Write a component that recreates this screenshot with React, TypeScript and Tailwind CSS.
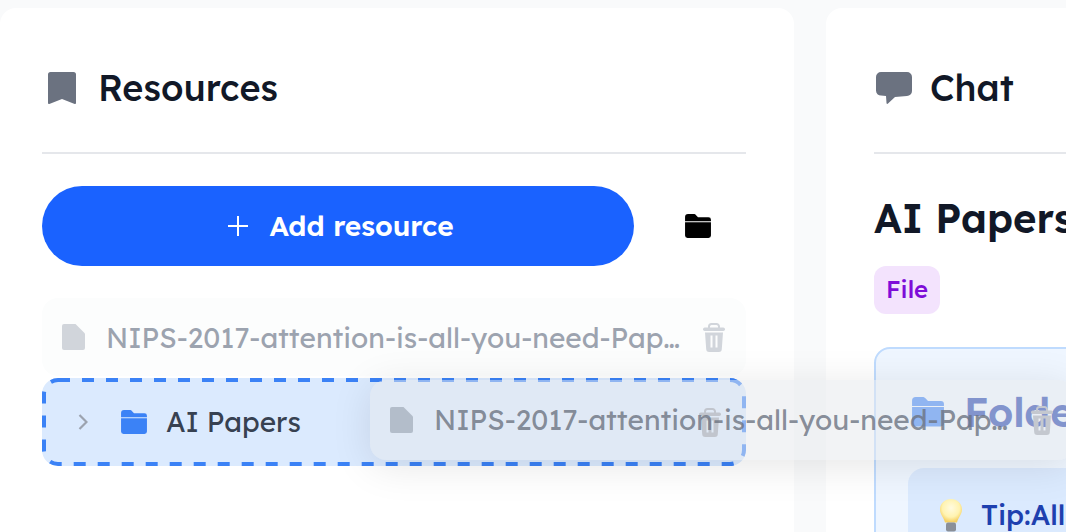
const FONT = "font-['Lexend','Inter','Noto_Sans',sans-serif]";

function Bookmark() {
  return (
    <svg width="28" height="32" viewBox="0 0 28 32" className="shrink-0">
      <path d="M2.500 0h23A2.500 2.500 0 0 1 28 2.500V31a1 1 0 0 1-1.300.9L14 27 1.300 31.900A1 1 0 0 1 0 31V2.500A2.500 2.500 0 0 1 2.500 0Z" fill="#6b7280" />
    </svg>
  );
}
function ChatIcon() {
  return (
    <svg width="36" height="32" viewBox="0 0 36 32" className="shrink-0">
      <path d="M5 0h26a5 5 0 0 1 5 5v14a5 5 0 0 1-5 5l-12 1-7 6.600c-.7.6-1.500.2-1.500-.7L10 24 5 23.600a5 5 0 0 1-5-5V5a5 5 0 0 1 5-5Z" fill="#6b7280" />
    </svg>
  );
}
function Folder({ color, size = 26 }: { color: string; size?: number }) {
  return (
    <svg width={size} height={size * 0.92} viewBox="0 0 26 24" className="shrink-0">
      <path d="M0 3a3 3 0 0 1 3-3h5.500c1.200 0 2 .5 2.800 1.400L13 3.200h10.500A2.500 2.500 0 0 1 26 5.700V7.300H0Z" fill={color} />
      <path d="M0 8.200h26V21.500a2.500 2.500 0 0 1-2.500 2.500H2.500A2.500 2.500 0 0 1 0 21.500Z" fill={color} />
    </svg>
  );
}
function FileIcon({ color }: { color: string }) {
  return (
    <svg width="23" height="26" viewBox="0 0 23 26" className="shrink-0">
      <path d="M2 0h11.500L23 9.500V24a2 2 0 0 1-2 2H2a2 2 0 0 1-2-2V2a2 2 0 0 1 2-2Z" fill={color} />
    </svg>
  );
}
function Trash({ color }: { color: string }) {
  return (
    <svg width="22" height="29" viewBox="0 0 22 29" className="shrink-0">
      <path d="M6 5V3.500A2.500 2.500 0 0 1 8.500 1h5A2.500 2.500 0 0 1 16 3.500V5" fill="none" stroke={color} strokeWidth="2" />
      <rect x="0" y="4.500" width="22" height="3.500" rx="1.700" fill={color} />
      <path d="M2 9.500h18l-1.200 16.500A3 3 0 0 1 15.800 29H6.200a3 3 0 0 1-3-3ZM7.500 12.500v12h2v-12Zm5 0v12h2v-12Z" fill={color} fillRule="evenodd" />
    </svg>
  );
}
function Bulb() {
  return (
    <svg width="22" height="36" viewBox="0 0 22 36" className="mt-[2px] shrink-0">
      <defs>
        <radialGradient id="bulbglow" cx="50%" cy="38%" r="60%">
          <stop offset="0%" stopColor="#fffbe0" />
          <stop offset="65%" stopColor="#fff3b0" />
          <stop offset="100%" stopColor="#f5cf60" />
        </radialGradient>
      </defs>
      <path d="M11 0C5 0 0 4.500 0 10.500c0 5 3.500 7.500 5 13h12c1.500-5.500 5-8 5-13C22 4.500 17 0 11 0Z" fill="url(#bulbglow)" />
      <rect x="6" y="23.500" width="10" height="9" rx="2" fill="#8a8f98" />
    </svg>
  );
}

const NAME = "NIPS-2017-attention-is-all-you-need-Paper.pdf";

export default function App() {
  return (
    <div className={`relative flex h-[532px] w-[1066px] gap-8 overflow-hidden bg-[#f9fafb] pt-2 ${FONT}`}>
      <section className="h-[600px] w-[794px] shrink-0 rounded-t-2xl bg-white pl-[42px] pr-12">
        <header className="flex h-[146px] items-center gap-[22px] border-b-2 border-[#e5e7eb] pl-[6px] pt-4">
          <Bookmark />
          <h2 className="text-[36px] font-medium leading-[44px] text-[#111827]">Resources</h2>
        </header>
        <div className="mt-8 flex items-center">
          <button className="flex h-20 w-[592px] items-center justify-center gap-[21px] rounded-full bg-[#1a62ff] pl-[6px] text-[28px] font-semibold text-white">
            <svg width="20" height="20" viewBox="0 0 20 20"><path d="M10 0v20M0 10h20" stroke="#fff" strokeWidth="2" /></svg>
            Add resource
          </button>
          <span className="ml-[51px]"><Folder color="#000000" /></span>
        </div>
        <div className="mt-8 flex h-[78px] items-center gap-[21px] rounded-2xl bg-[#fcfdfd] pl-5 pr-[21px]">
          <FileIcon color="#d1d5db" />
          <span className="min-w-0 flex-1 truncate pt-[2px] text-[28px] text-[#9ca3af]">{NAME}</span>
          <Trash color="#d1d5db" />
        </div>
        <div className="relative mt-[2px] flex h-[88px] items-center rounded-2xl bg-[#dbeafe] pl-9 pr-[25px]">
          <svg className="absolute inset-0" width="704" height="88">
            <rect x="2" y="2" width="700" height="84" rx="14" fill="none" stroke="#3b82f6" strokeWidth="4" strokeDasharray="12 12" />
          </svg>
          <svg width="10" height="16" viewBox="0 0 10 16" className="shrink-0"><path d="M1.500 1l7 7-7 7" fill="none" stroke="#9ca3af" strokeWidth="2.200" /></svg>
          <span className="ml-[33px]"><Folder color="#3b82f6" /></span>
          <span className="ml-[19px] text-[28px] text-[#374151]">AI Papers</span>
          <span className="ml-auto"><Trash color="#9ca3af" /></span>
        </div>
      </section>

      <section className="h-[600px] min-w-0 flex-1 overflow-hidden rounded-tl-2xl bg-white pl-12">
        <header className="flex h-[146px] w-[400px] items-center gap-[18px] border-b-2 border-[#e5e7eb] pl-[2px] pt-4">
          <ChatIcon />
          <h2 className="text-[36px] font-medium leading-[44px] text-[#111827]">Chat</h2>
        </header>
        <h3 className="mt-10 whitespace-nowrap text-[40px] font-semibold leading-[48px] text-[#111827]">AI Papers</h3>
        <span className="mt-6 flex h-12 w-[66px] items-center justify-center rounded-xl bg-[#f3e3fd] pb-[2px] text-[24px] font-medium text-[#7e0cd8]">File</span>
        <div className="mt-[33px] h-[300px] w-[400px] rounded-tl-2xl border-2 border-[#bfdbfe] bg-[#eff6ff] pl-8 pt-[41px]">
          <div className="flex items-center gap-5 pl-1">
            <Folder color="#3b82f6" size={32} />
            <span className="text-[40px] font-semibold leading-[44px] text-[#1e40af]">Folder</span>
          </div>
          <div className="mt-[34px] flex h-[100px] w-[300px] items-start gap-[19px] rounded-tl-2xl bg-[#dbeafe] pl-8 pt-[29px]">
            <Bulb />
            <span className="whitespace-nowrap text-[28px] font-medium leading-[36px] text-[#1e40af]">Tip:All</span>
          </div>
        </div>
      </section>

      <div className="absolute left-[370px] top-[380px] flex h-20 w-[704px] items-center gap-[21px] rounded-2xl bg-[#e5e7eb]/50 pl-5 shadow-[0_6px_40px_rgba(0,0,0,0.1)]">
        <FileIcon color="#b3bdca" />
        <span className="w-[576px] truncate text-[28px] text-[#6b7280]/80">{NAME}</span>
        <Trash color="#c4c8cf" />
      </div>
    </div>
  );
}
